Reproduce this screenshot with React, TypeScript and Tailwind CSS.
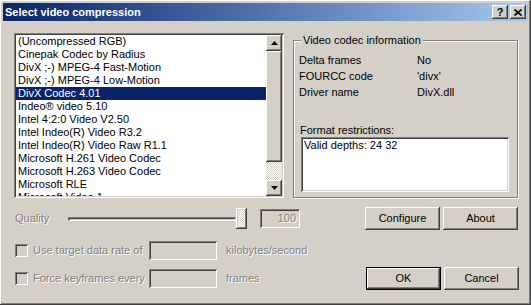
const CODECS = [
  "(Uncompressed RGB)",
  "Cinepak Codec by Radius",
  "DivX ;-) MPEG-4 Fast-Motion",
  "DivX ;-) MPEG-4 Low-Motion",
  "DivX Codec 4.01",
  "Indeo® video 5.10",
  "Intel 4:2:0 Video V2.50",
  "Intel Indeo(R) Video R3.2",
  "Intel Indeo(R) Video Raw R1.1",
  "Microsoft H.261 Video Codec",
  "Microsoft H.263 Video Codec",
  "Microsoft RLE",
  "Microsoft Video 1",
];

const SELECTED = 4;

const raised =
  "shadow-[inset_-1px_-1px_#404040,inset_1px_1px_#ffffff,inset_-2px_-2px_#808080,inset_2px_2px_#d4d0c8]";
const sunken =
  "shadow-[inset_1px_1px_#808080,inset_-1px_-1px_#ffffff,inset_2px_2px_#404040,inset_-2px_-2px_#d4d0c8]";
const dither =
  "bg-[repeating-conic-gradient(#ffffff_0_25%,#d4d0c8_0_50%)] bg-[length:2px_2px]";
const disabledText = "text-[#808080] [text-shadow:1px_1px_0_#ffffff]";

function Arrow({ down }: { down?: boolean }) {
  return (
    <svg width="7" height="4" viewBox="0 0 7 4">
      {down ? <polygon points="0,0 7,0 3.5,4" fill="#000" /> : <polygon points="0,4 7,4 3.5,0" fill="#000" />}
    </svg>
  );
}

function Button({ label, isDefault }: { label: string; isDefault?: boolean }) {
  return (
    <div className={`w-[75px] h-[23px] ${isDefault ? "border border-black" : ""}`}>
      <div className={`w-full h-full flex items-center justify-center bg-[#d4d0c8] text-black ${raised}`}>
        {label}
      </div>
    </div>
  );
}

function CheckRow({ label, unit }: { label: string; unit: string }) {
  return (
    <div className="flex items-center h-[19px]">
      <div className="w-[135px] flex items-center pl-[1px]">
        <div className={`w-[13px] h-[13px] bg-[#d4d0c8] ${sunken}`} />
        <span className={`ml-[5px] ${disabledText}`}>{label}</span>
      </div>
      <div className={`w-[68px] h-[19px] bg-[#d4d0c8] ${sunken}`} />
      <span className={`ml-[9px] ${disabledText}`}>{unit}</span>
    </div>
  );
}

export default function App() {
  return (
    <div
      className={`w-[531px] h-[305px] p-[3px] flex flex-col bg-[#d4d0c8] text-[11px] leading-[13px] text-black font-['Liberation_Sans',Arial,sans-serif] overflow-hidden ${raised}`}
    >
      {/* title bar */}
      <div className="h-[18px] flex items-center pl-[2px] pr-[2px] bg-gradient-to-r from-[#0a246a] to-[#a6caf0]">
        <span className="text-white font-bold text-[11px]">Select video compression</span>
        <div className="ml-auto flex gap-[2px]">
          <div className={`w-[16px] h-[14px] bg-[#d4d0c8] flex items-center justify-center font-bold text-[11px] leading-none ${raised}`}>
            ?
          </div>
          <div className={`w-[16px] h-[14px] bg-[#d4d0c8] flex items-center justify-center ${raised}`}>
            <svg width="8" height="7" viewBox="0 0 8 7">
              <path d="M0.5 0.5 L7.5 6.5 M7.5 0.5 L0.5 6.5" stroke="#000" strokeWidth="1.6" />
            </svg>
          </div>
        </div>
      </div>

      <div className="pl-[11px] pr-[10px] pt-[12px]">
        <div className="flex">
          {/* codec list */}
          <div className={`w-[270px] h-[165px] p-[2px] bg-white flex ${sunken}`}>
            <div className="flex-1 overflow-hidden">
              {CODECS.map((c, i) => (
                <div
                  key={c}
                  className={`h-[13px] leading-[13px] pl-[2px] whitespace-nowrap ${i === SELECTED ? "bg-[#0a246a] text-white" : ""}`}
                >
                  {c}
                </div>
              ))}
            </div>
            <div className="w-[16px] flex flex-col">
              <div className={`h-[16px] bg-[#d4d0c8] flex items-center justify-center ${raised}`}>
                <Arrow />
              </div>
              <div className={`h-[111px] bg-[#d4d0c8] ${raised}`} />
              <div className={`flex-1 ${dither}`} />
              <div className={`h-[16px] bg-[#d4d0c8] flex items-center justify-center ${raised}`}>
                <Arrow down />
              </div>
            </div>
          </div>

          {/* codec info group */}
          <div className="relative ml-[9px] mt-[7px] w-[225px] h-[158px] border border-[#808080] shadow-[inset_1px_1px_#ffffff,1px_1px_#ffffff]">
            <span className="absolute left-[7px] -top-[7px] px-[2px] bg-[#d4d0c8]">Video codec information</span>
            <div className="pl-[5px] pt-[11px]">
              <div className="grid grid-cols-[118px_auto] leading-[16px]">
                <span>Delta frames</span>
                <span>No</span>
                <span>FOURCC code</span>
                <span>'divx'</span>
                <span>Driver name</span>
                <span>DivX.dll</span>
              </div>
              <div className="mt-[24px] pl-[1px]">Format restrictions:</div>
              <div className={`ml-[2px] w-[208px] h-[55px] bg-white pl-[3px] pt-[2px] ${sunken}`}>
                Valid depths: 24 32
              </div>
            </div>
          </div>
        </div>

        {/* quality row */}
        <div className="flex items-center h-[23px] mt-[9px]">
          <span className={`w-[54px] pl-[1px] ${disabledText}`}>Quality</span>
          <div className="w-[180px] h-[21px] flex items-center">
            <div className={`w-[168px] h-[4px] ${sunken}`} />
            <div className={`w-[11px] h-[21px] ${dither} ${raised}`} />
          </div>
          <div className={`ml-[12px] w-[40px] h-[19px] bg-[#d4d0c8] flex items-center justify-end pr-[4px] ${sunken} ${disabledText}`}>
            100
          </div>
          <div className="ml-[65px]">
            <Button label="Configure" />
          </div>
          <div className="ml-[3px]">
            <Button label="About" />
          </div>
        </div>

        <div className="flex">
          <div className="flex flex-col mt-[11px] gap-[9px]">
            <CheckRow label="Use target data rate of" unit="kilobytes/second" />
            <CheckRow label="Force keyframes every" unit="frames" />
          </div>
          <div className="ml-auto mr-[-1px] mt-[37px] flex gap-[3px]">
            <Button label="OK" isDefault />
            <Button label="Cancel" />
          </div>
        </div>
      </div>
    </div>
  );
}
